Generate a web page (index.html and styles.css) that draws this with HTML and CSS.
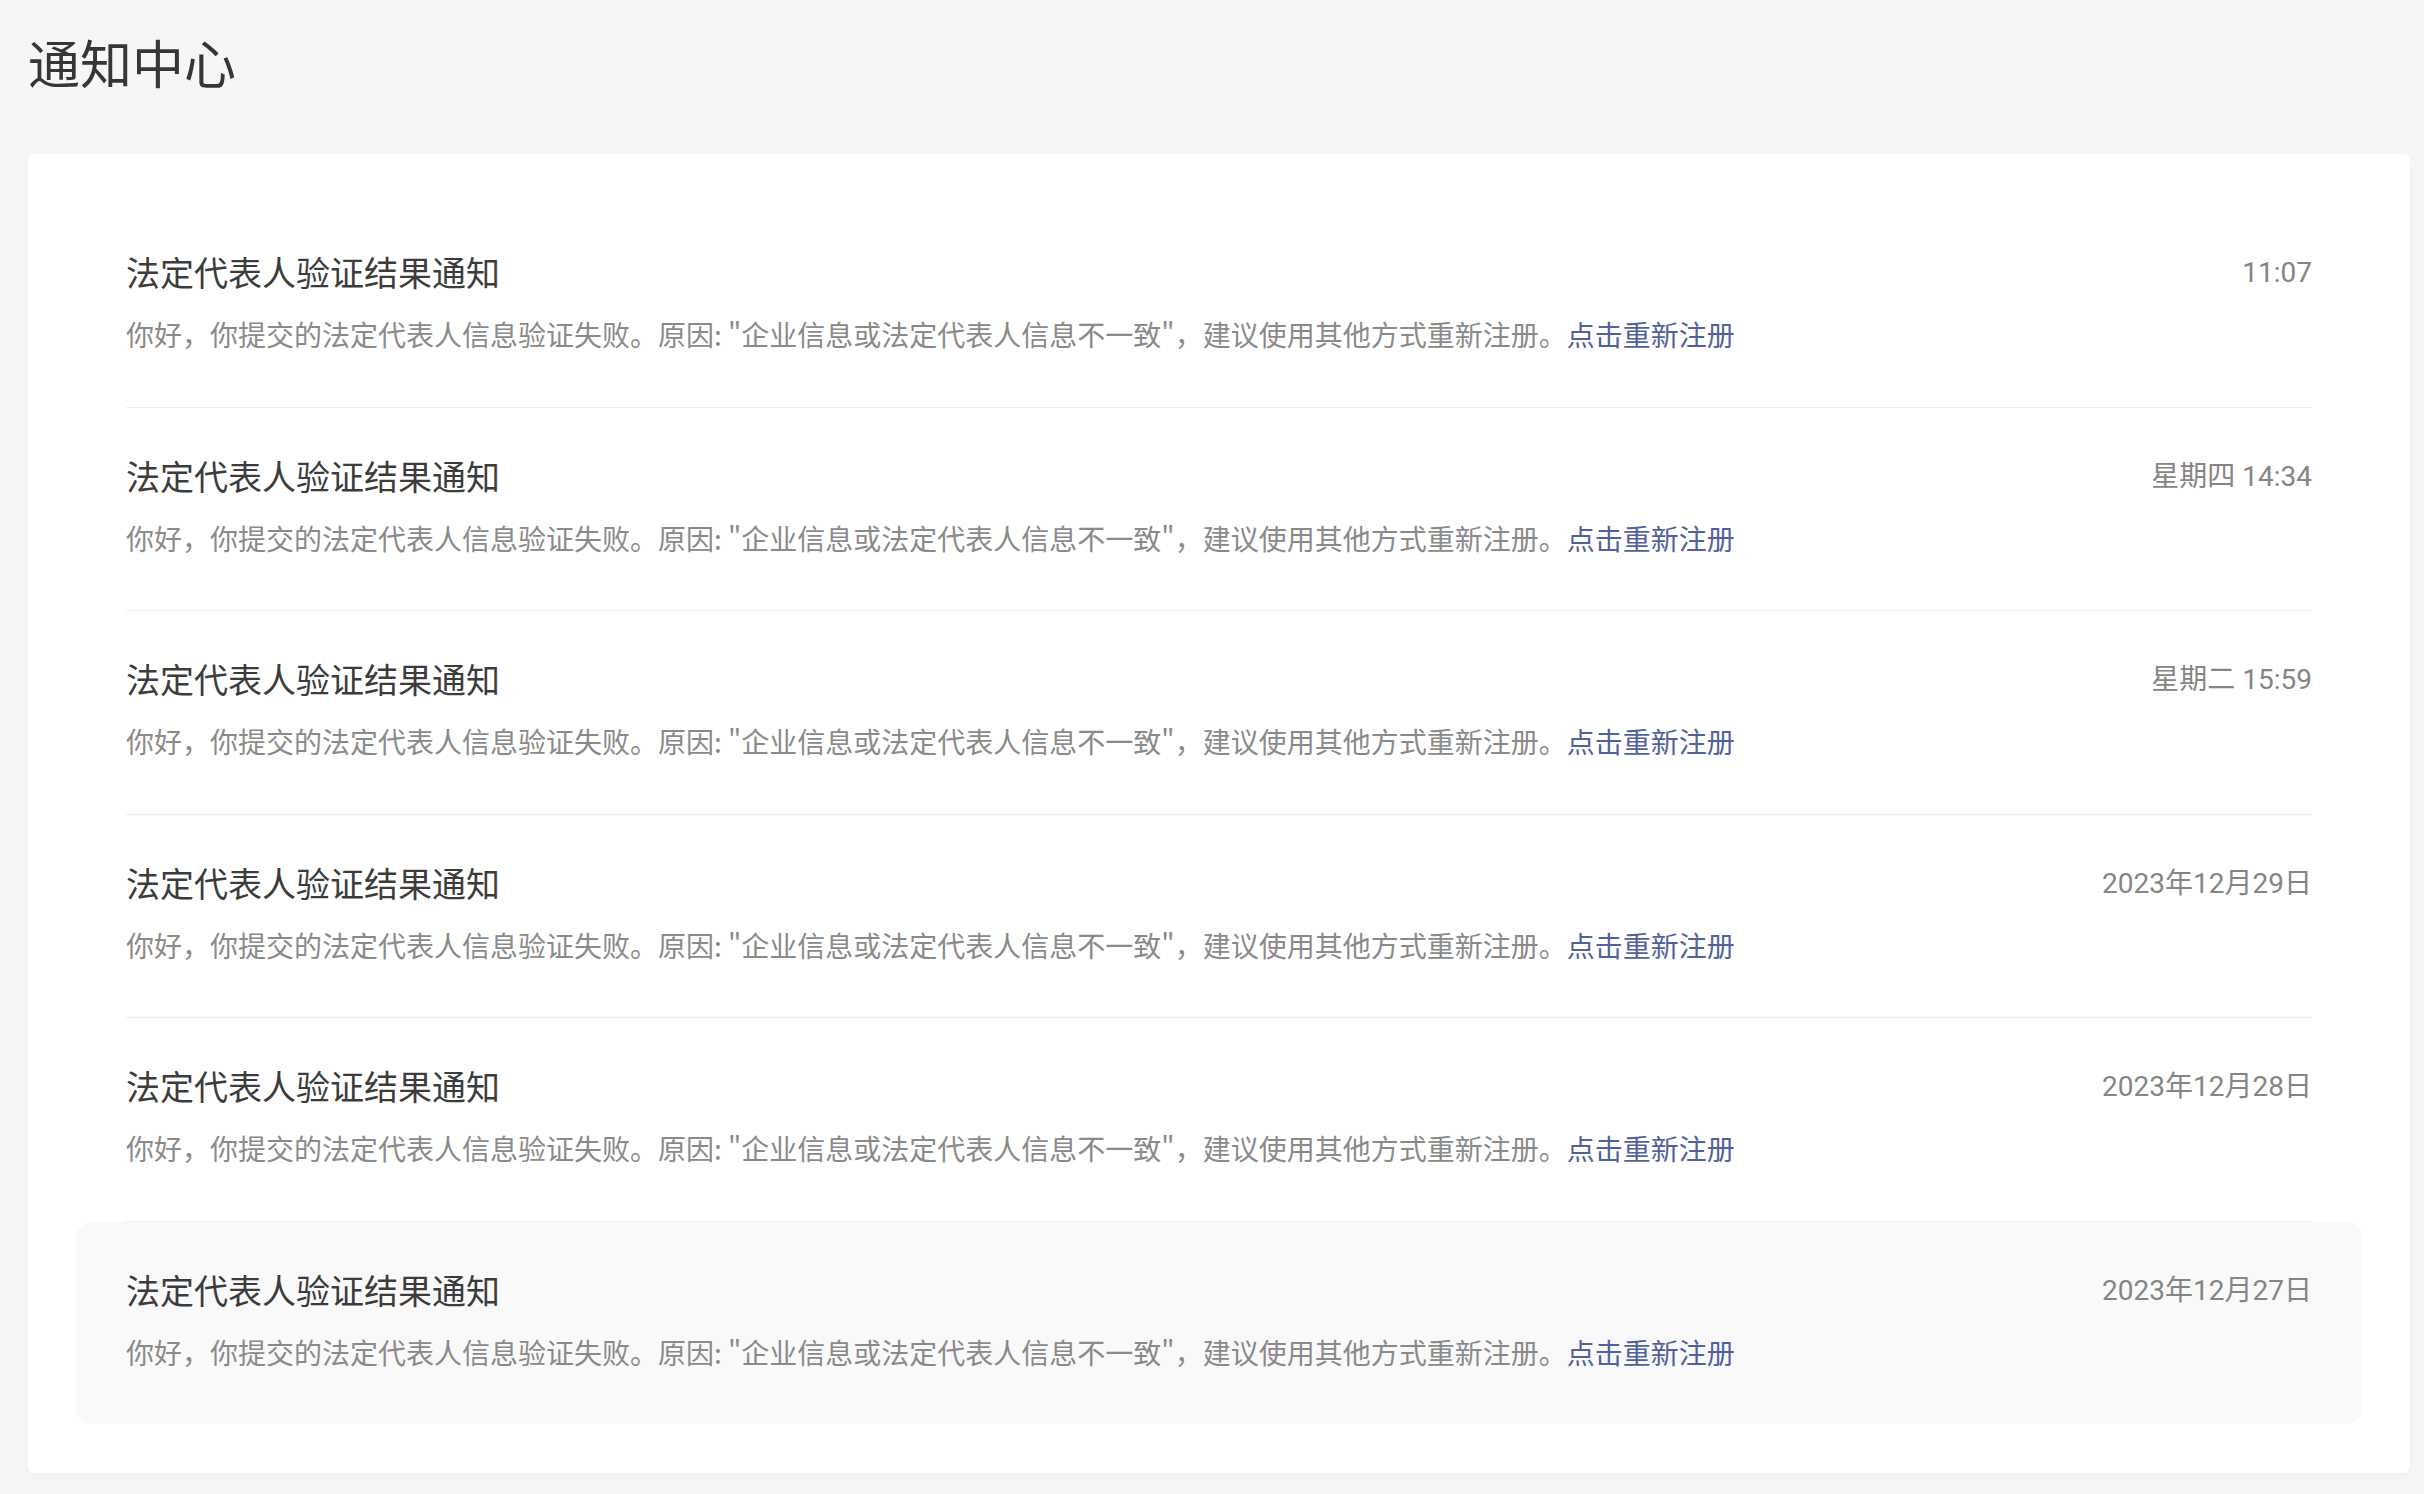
FILE: index.html
```html
<!DOCTYPE html>
<html lang="zh-CN">
<head>
<meta charset="utf-8">
<title>通知中心</title>
<link rel="stylesheet" href="styles.css">
</head>
<body>
<div class="page">
  <h1 class="page-title">通知中心</h1>
  <div class="card">
    <ul class="notice-list">
      <li class="notice">
        <div class="notice-inner">
          <div class="notice-head"><span class="notice-title">法定代表人验证结果通知</span><span class="notice-time">11:07</span></div>
          <p class="notice-body">你好，你提交的法定代表人信息验证失败。原因: "企业信息或法定代表人信息不一致"，建议使用其他方式重新注册。<a class="notice-link" href="#">点击重新注册</a></p>
        </div>
      </li>
      <li class="notice">
        <div class="notice-inner">
          <div class="notice-head"><span class="notice-title">法定代表人验证结果通知</span><span class="notice-time">星期四 14:34</span></div>
          <p class="notice-body">你好，你提交的法定代表人信息验证失败。原因: "企业信息或法定代表人信息不一致"，建议使用其他方式重新注册。<a class="notice-link" href="#">点击重新注册</a></p>
        </div>
      </li>
      <li class="notice">
        <div class="notice-inner">
          <div class="notice-head"><span class="notice-title">法定代表人验证结果通知</span><span class="notice-time">星期二 15:59</span></div>
          <p class="notice-body">你好，你提交的法定代表人信息验证失败。原因: "企业信息或法定代表人信息不一致"，建议使用其他方式重新注册。<a class="notice-link" href="#">点击重新注册</a></p>
        </div>
      </li>
      <li class="notice">
        <div class="notice-inner">
          <div class="notice-head"><span class="notice-title">法定代表人验证结果通知</span><span class="notice-time">2023年12月29日</span></div>
          <p class="notice-body">你好，你提交的法定代表人信息验证失败。原因: "企业信息或法定代表人信息不一致"，建议使用其他方式重新注册。<a class="notice-link" href="#">点击重新注册</a></p>
        </div>
      </li>
      <li class="notice">
        <div class="notice-inner">
          <div class="notice-head"><span class="notice-title">法定代表人验证结果通知</span><span class="notice-time">2023年12月28日</span></div>
          <p class="notice-body">你好，你提交的法定代表人信息验证失败。原因: "企业信息或法定代表人信息不一致"，建议使用其他方式重新注册。<a class="notice-link" href="#">点击重新注册</a></p>
        </div>
      </li>
      <li class="notice notice-active">
        <div class="notice-inner">
          <div class="notice-head"><span class="notice-title">法定代表人验证结果通知</span><span class="notice-time">2023年12月27日</span></div>
          <p class="notice-body">你好，你提交的法定代表人信息验证失败。原因: "企业信息或法定代表人信息不一致"，建议使用其他方式重新注册。<a class="notice-link" href="#">点击重新注册</a></p>
        </div>
      </li>
    </ul>
  </div>
</div>
</body>
</html>
```
FILE: styles.css
```css
html, body {
  margin: 0;
  padding: 0;
  background: #f5f6f8;
}
body {
  font-family: "Noto Sans CJK SC", "Noto Sans", sans-serif;
  color: #333333;
}
.page {
  padding: 26px 14px 22px 28px;
}
.page-title {
  margin: 0 0 56px 0;
  font-size: 52px;
  line-height: 72px;
  font-weight: 400;
  color: #363636;
}
.card {
  background: #ffffff;
  border-radius: 6px;
  box-shadow: 0 2px 8px rgba(0, 0, 0, 0.035);
  padding: 50px 48px 48.5px;
}
.notice-list {
  list-style: none;
  margin: 0;
  padding: 0;
}
.notice {
  padding: 0 50px;
  border-radius: 16px;
}
.notice-inner {
  padding: 44px 0 52.5px;
  border-bottom: 1px solid #eeeeee;
}
.notice:last-child .notice-inner {
  border-bottom: none;
}
.notice-active {
  background: #f9f9fa;
}
.notice-head {
  display: flex;
  justify-content: space-between;
  align-items: center;
  height: 48px;
}
.notice-title {
  font-size: 34px;
  line-height: 48px;
  font-weight: 400;
  color: #3c3c3c;
}
.notice-time {
  font-family: Roboto, "Noto Sans CJK SC", sans-serif;
  font-size: 28px;
  line-height: 48px;
  margin-top: 2px;
  color: #858585;
}
.notice-body {
  margin: 18px 0 0 0;
  font-size: 28px;
  line-height: 40px;
  font-weight: 400;
  color: #8a8a8a;
}
.notice-link {
  color: #51629a;
  text-decoration: none;
}
```
